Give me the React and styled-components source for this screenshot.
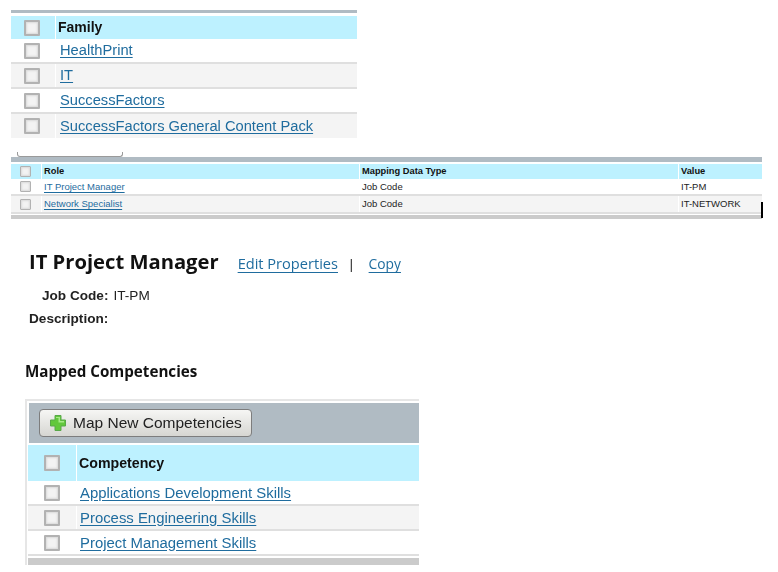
import React from 'react'
import styled, { createGlobalStyle } from 'styled-components'

const GlobalStyle = createGlobalStyle`
    html, body {
        margin: 0;
        padding: 0;
        background: #fff;
    }
    body {
        font-family: "Liberation Sans", Arial, sans-serif;
        color: #222;
    }
`
const Page = styled.div`
    position: relative;
    width: 778px;
    height: 572px;
    overflow: hidden;
    padding-top: 10px;
    box-sizing: border-box;
    filter: blur(0.3px);
`
const FamilyBlock = styled.section`
    width: 346px;
    margin-left: 11px;
`
const RoleBlock = styled.section`
    position: relative;
    width: 751px;
    margin-left: 11px;
    margin-top: 19px;
`
const HiddenButton = styled.div`
    position: absolute;
    left: 6px;
    top: -5px;
    width: 106px;
    height: 5px;
    box-sizing: border-box;
    border: 1px solid #9a9a9a;
    border-top: none;
    border-radius: 0 0 3px 3px;
`
const CompetencyBlock = styled.section`
    width: 394px;
    margin-left: 25px;
    margin-top: 17px;
    padding: 2px 0 0 1px;
    border-top: 2px solid #e6e6e6;
    border-left: 2px solid #e6e6e6;
    box-sizing: border-box;
`
const TopBar = styled.div`
    height: ${props => props.$height}px;
    background: #b0bbc3;
    margin-bottom: ${props => props.$gap}px;
`
const Toolbar = styled.div`
    height: 40px;
    background: #b0bbc3;
    margin: 0 0 2px 1px;
    padding: 6px 0 0 10px;
    box-sizing: border-box;
`
const BottomBar = styled.div`
    height: ${props => props.$height}px;
    background: #cbcbcb;
    margin-top: ${props => props.$gap}px;
`
const Row = styled.div`
    display: grid;
    grid-template-columns: ${props => props.$columns};
    height: ${props => props.$height}px;
    box-sizing: border-box;
    background: ${props => props.$head ? '#bdf1ff' : props.$alt ? '#f4f4f4' : '#fff'};
    border-bottom: ${props => props.$head || props.$last ? 'none' : '2px solid #dfdfdf'};
`
const Cell = styled.div`
    display: flex;
    align-items: center;
    min-width: 0;
    padding-left: ${props => props.$pad || 0}px;
    padding-bottom: ${props => props.$lift || 0}px;
    border-left: ${props => props.$divider ? '1px solid #fff' : 'none'};
    font-size: ${props => props.$size}px;
    font-weight: ${props => props.$head ? 700 : 400};
    color: ${props => props.$head ? '#111' : '#1c1c1c'};
    white-space: nowrap;
`
const CheckCell = styled.div`
    display: flex;
    align-items: center;
    justify-content: center;
    padding-right: ${props => props.$shift || 0}px;
`
const Check = styled.span`
    display: block;
    width: ${props => props.$box}px;
    height: ${props => props.$box}px;
    box-sizing: border-box;
    border: ${props => props.$box > 12 ? 2 : 1}px solid #b2b2b2;
    border-radius: 1px;
    background: #f3f3f3;
    box-shadow: inset 0 0 2px 1px #dadada;
`
const TableLink = styled.a`
    color: #1f6c9e;
    text-decoration: underline;
    text-underline-offset: 2px;
`
const TitleRow = styled.div`
    display: flex;
    align-items: baseline;
    margin: 28px 0 0 29px;
    height: 30px;
`
const Title = styled.h1`
    margin: 0;
    font-family: "Open Sans", sans-serif;
    font-size: 20.2px;
    font-weight: 700;
    color: #111;
`
const TitleLink = styled.a`
    font-family: "Open Sans", sans-serif;
    font-size: ${props => props.$size}px;
    color: #1f6c9e;
    text-decoration: underline;
    text-underline-offset: 3px;
    margin-left: ${props => props.$gap}px;
`
const Separator = styled.span`
    font-family: "Open Sans", sans-serif;
    font-size: 12px;
    font-weight: 600;
    color: #222;
    margin-left: 10px;
`
const Field = styled.div`
    display: flex;
    align-items: center;
    gap: 5px;
    height: 20px;
    font-size: 13.6px;
    margin-left: ${props => props.$indent}px;
    margin-top: ${props => props.$top}px;
`
const FieldLabel = styled.span`
    font-weight: 700;
    color: #222;
`
const SectionTitle = styled.h2`
    margin: 32px 0 0 25px;
    font-family: "Open Sans", sans-serif;
    font-size: 15.2px;
    line-height: 22px;
    font-weight: 700;
    color: #111;
`
const MapButton = styled.button`
    display: flex;
    align-items: center;
    gap: 7px;
    width: 213px;
    height: 28px;
    padding: 0 0 0 10px;
    box-sizing: border-box;
    border: 1px solid #7d7d7d;
    border-radius: 4px;
    background: linear-gradient(#f6f6f4, #d6d6d2);
    font-family: "Liberation Sans", Arial, sans-serif;
    font-size: 15.5px;
    color: #222;
`
const BlackMark = styled.div`
    position: absolute;
    left: 761px;
    top: 202px;
    width: 2px;
    height: 16px;
    background: #000;
`

const PlusIcon = () => (
    <svg width="16" height="16" viewBox="0 0 16 16">
        <path d="M5 .5h6v4.5h4.500v6H11v4.500H5V11H.5V5H5z" fill="#62c83c" stroke="#58a848" strokeWidth="1" />
        <path d="M6 2h4v4h4v1.500H8.500V3H6z" fill="#a6ea88" />
    </svg>
)

const families = ['HealthPrint', 'IT', 'SuccessFactors', 'SuccessFactors General Content Pack']
const roles = [
    { role: 'IT Project Manager', type: 'Job Code', value: 'IT-PM' },
    { role: 'Network Specialist', type: 'Job Code', value: 'IT-NETWORK' },
]
const competencies = ['Applications Development Skills', 'Process Engineering Skills', 'Project Management Skills']

export default function App() {
    return (
        <Page>
            <GlobalStyle />
            <FamilyBlock>
                <TopBar $height={3} $gap={3} />
                <Row $head $columns="44px 1fr" $height={23}>
                    <CheckCell $shift={2}><Check $box={16} /></CheckCell>
                    <Cell $head $divider $pad={2} $lift={2} $size={14}>Family</Cell>
                </Row>
                {families.map((name, i) => {
                    const last = i === families.length - 1
                    return (
                        <Row key={name} $alt={i % 2 === 1} $last={last} $columns="44px 1fr" $height={last ? 24 : 25}>
                            <CheckCell $shift={2}><Check $box={16} /></CheckCell>
                            <Cell $divider $pad={4} $lift={1} $size={14.7}><TableLink>{name}</TableLink></Cell>
                        </Row>
                    )
                })}
            </FamilyBlock>

            <RoleBlock>
                <HiddenButton />
                <TopBar $height={5} $gap={2} />
                <Row $head $columns="30px 318px 319px 1fr" $height={15}>
                    <CheckCell $shift={1}><Check $box={11} /></CheckCell>
                    <Cell $head $divider $pad={2} $lift={2} $size={9.3}>Role</Cell>
                    <Cell $head $divider $pad={2} $lift={2} $size={9.3}>Mapping Data Type</Cell>
                    <Cell $head $divider $pad={2} $lift={2} $size={9.3}>Value</Cell>
                </Row>
                {roles.map((r, i) => (
                    <Row key={r.role} $alt={i % 2 === 1} $columns="30px 318px 319px 1fr" $height={i === 0 ? 17 : 18}>
                        <CheckCell $shift={1}><Check $box={11} /></CheckCell>
                        <Cell $divider $pad={2} $lift={1} $size={9.5}><TableLink>{r.role}</TableLink></Cell>
                        <Cell $divider $pad={2} $lift={1} $size={9.5}>{r.type}</Cell>
                        <Cell $divider $pad={2} $lift={1} $size={9.5}>{r.value}</Cell>
                    </Row>
                ))}
                <BottomBar $height={4} $gap={1} />
            </RoleBlock>

            <TitleRow>
                <Title>IT Project Manager</Title>
                <TitleLink $gap={19} $size={14.6}>Edit Properties</TitleLink>
                <Separator>|</Separator>
                <TitleLink $gap={14} $size={13.8}>Copy</TitleLink>
            </TitleRow>
            <Field $indent={42} $top={8}>
                <FieldLabel>Job Code:</FieldLabel>
                <span>IT-PM</span>
            </Field>
            <Field $indent={29} $top={3}>
                <FieldLabel>Description:</FieldLabel>
            </Field>
            <SectionTitle>Mapped Competencies</SectionTitle>

            <CompetencyBlock>
                <Toolbar>
                    <MapButton type="button"><PlusIcon />Map New Competencies</MapButton>
                </Toolbar>
                <Row $head $columns="48px 1fr" $height={36}>
                    <CheckCell><Check $box={16} /></CheckCell>
                    <Cell $head $divider $pad={2} $lift={0} $size={14.2}>Competency</Cell>
                </Row>
                {competencies.map((name, i) => (
                    <Row key={name} $alt={i % 2 === 1} $columns="48px 1fr" $height={25}>
                        <CheckCell><Check $box={16} /></CheckCell>
                        <Cell $divider $pad={3} $lift={0} $size={14.9}><TableLink>{name}</TableLink></Cell>
                    </Row>
                ))}
                <BottomBar $height={7} $gap={2} />
            </CompetencyBlock>
            <BlackMark />
        </Page>
    )
}
